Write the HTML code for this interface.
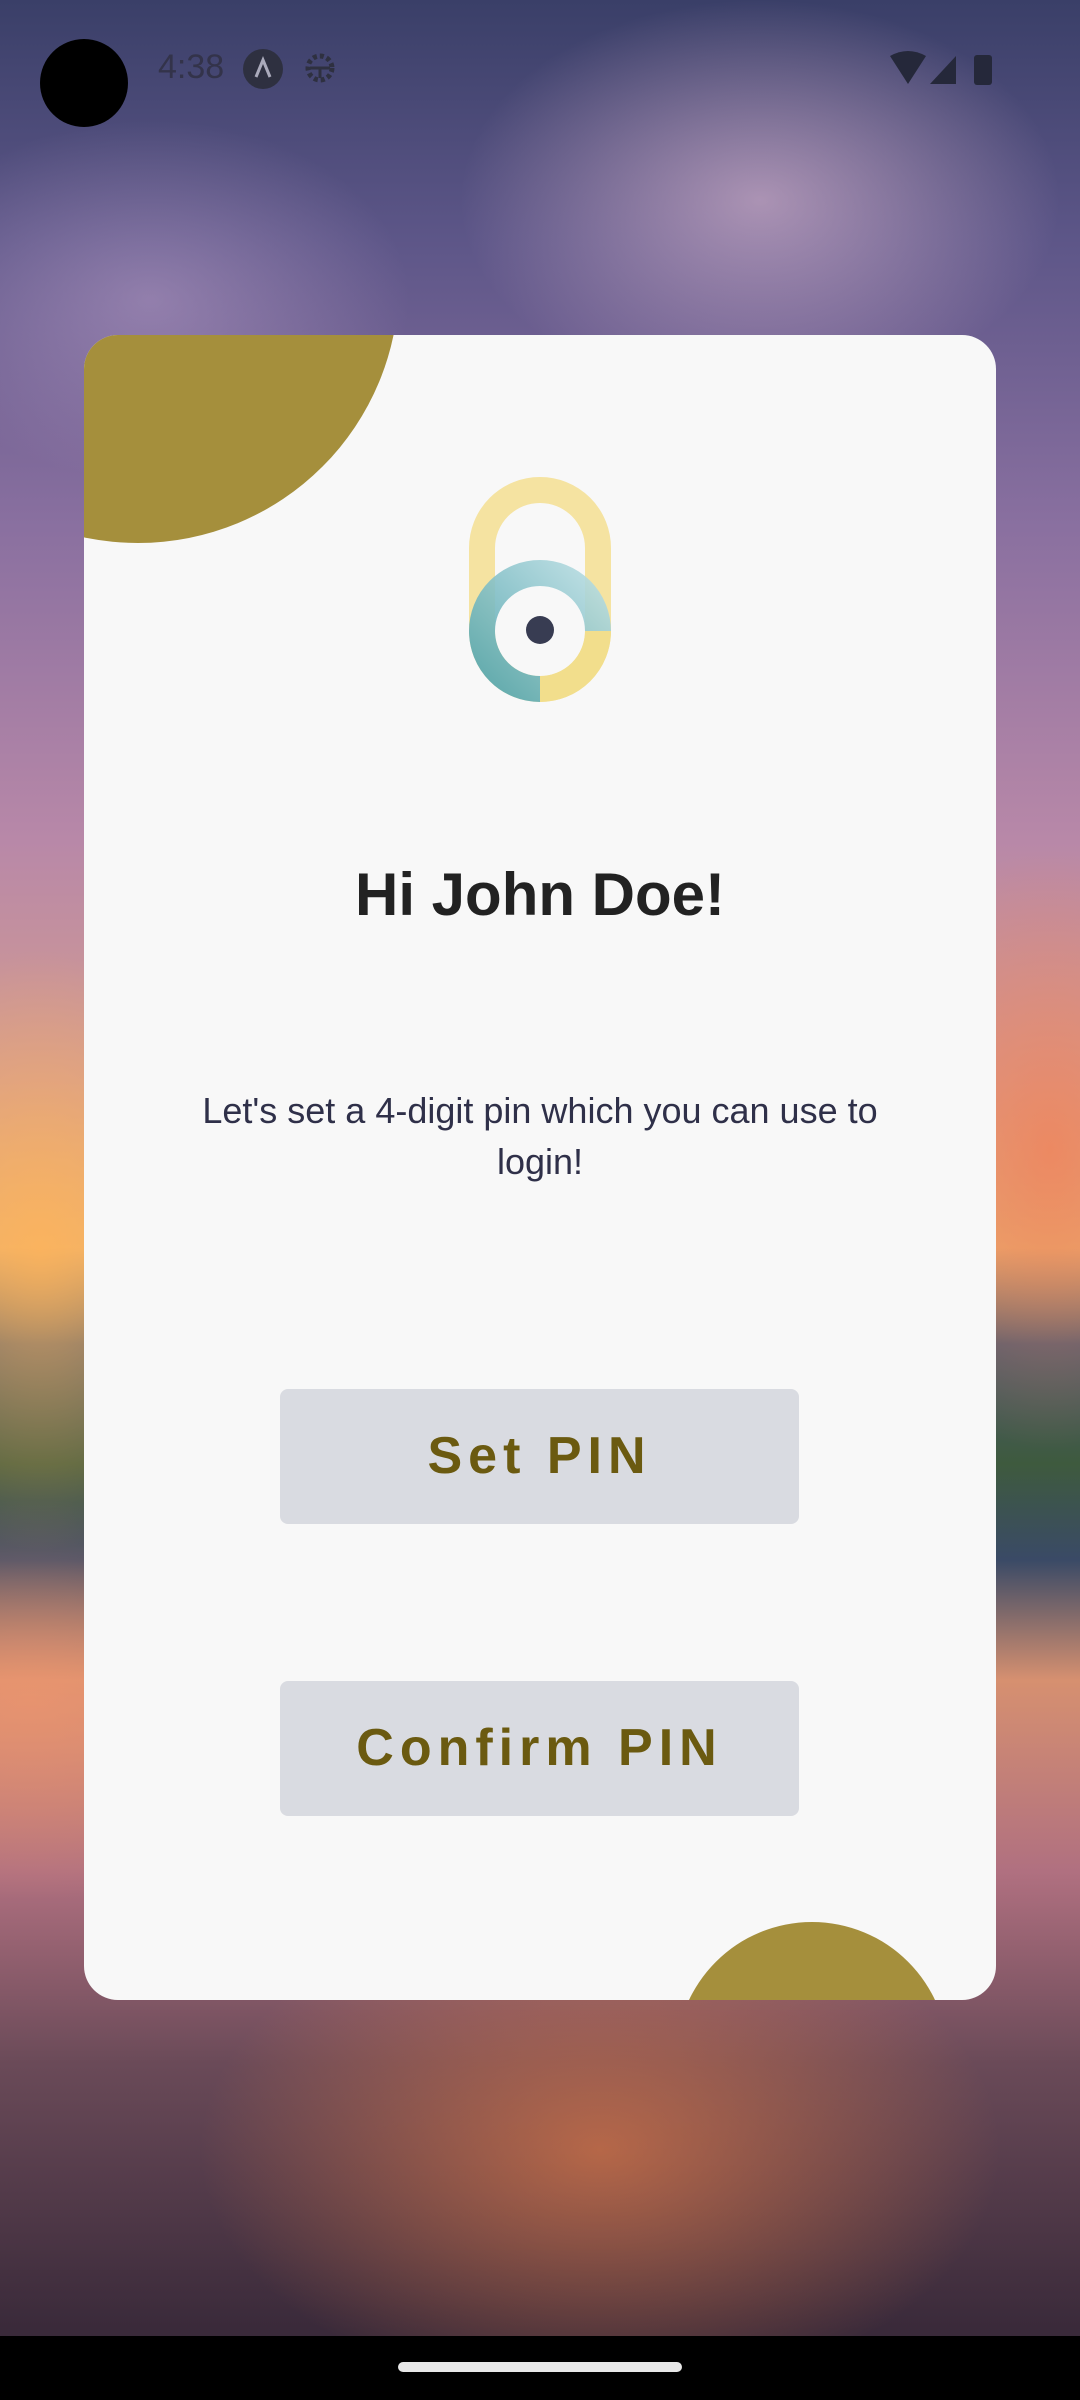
<!DOCTYPE html>
<html><head><meta charset="utf-8"><style>
*{margin:0;padding:0;box-sizing:border-box}
html,body{width:1080px;height:2400px;overflow:hidden}
body{position:relative;font-family:"Liberation Sans","DejaVu Sans",sans-serif;
background:
radial-gradient(ellipse 300px 200px at 760px 200px,rgba(240,200,220,.55),transparent),
radial-gradient(ellipse 260px 180px at 150px 300px,rgba(200,170,210,.45),transparent),
radial-gradient(ellipse 200px 300px at 40px 1250px,rgba(255,180,90,.8),transparent),
radial-gradient(ellipse 200px 300px at 1050px 1150px,rgba(240,130,90,.8),transparent),
radial-gradient(ellipse 300px 200px at 30px 1700px,rgba(240,150,110,.7),transparent),
radial-gradient(ellipse 400px 250px at 600px 2150px,rgba(220,120,70,.7),transparent),
linear-gradient(180deg,#3a3f68 0%,#5d5688 10%,#8a70a0 22%,#b888a8 35%,#d49c90 45%,#e8b070 52%,#4a5a70 56%,#3e5a3e 61%,#3a4a66 65%,#d69070 70%,#b07080 78%,#6a4a58 86%,#3a2a3a 97%);}
.nav{position:absolute;left:0;top:2336px;width:1080px;height:64px;background:#000}
.pill{position:absolute;left:398px;top:2362px;width:284px;height:10px;border-radius:5px;background:#e8e8e8}
.cam{position:absolute;left:40px;top:39px;width:88px;height:88px;border-radius:50%;background:#000}
.time{position:absolute;left:158px;top:48px;font-size:34px;color:#33334a}
.card{position:absolute;left:84px;top:335px;width:912px;height:1665px;background:#f8f8f8;border-radius:34px;overflow:hidden}
.c1{position:absolute;left:-207px;top:-314px;width:522px;height:522px;border-radius:50%;background:#a58f3c}
.c2{position:absolute;left:592px;top:1587px;width:272px;height:272px;border-radius:50%;background:#a58f3c}
h1{position:absolute;left:0;width:912px;top:525px;text-align:center;font-size:60px;font-weight:bold;color:#222}
.p{position:absolute;left:80px;width:752px;top:750px;text-align:center;font-size:36px;line-height:51px;color:#2f3049}
.btn{position:absolute;left:196px;width:519px;height:135px;background:#d9dbe1;border-radius:8px;text-align:center;line-height:135px;font-size:52px;font-weight:bold;letter-spacing:6px;color:#6b5a10}
</style></head><body>
<div class="cam"></div>
<div class="time">4:38</div>
<svg style="position:absolute;left:242px;top:48px" width="42" height="42"><circle cx="21" cy="21" r="20" fill="#2e3040"/><path d="M14 29 L21 12 L28 29" stroke="#aab" stroke-width="3" fill="none"/></svg>
<svg style="position:absolute;left:300px;top:48px" width="40" height="40"><circle cx="20" cy="20" r="12" fill="none" stroke="#2e3040" stroke-width="5" stroke-dasharray="4 3"/><path d="M10 20h20M20 20v10" stroke="#2e3040" stroke-width="3"/></svg>
<svg style="position:absolute;left:890px;top:50px" width="120" height="36"><path d="M0 6 Q18 -4 36 6 L18 34Z" fill="#25283a"/><path d="M40 34 L66 6 V34Z" fill="#25283a"/><rect x="84" y="5" width="18" height="30" rx="3" fill="#25283a"/></svg>
<div class="card">
<div class="c1"></div><div class="c2"></div>
<svg style="position:absolute;left:385px;top:142px" width="142" height="225" viewBox="0 0 142 225">
<defs><linearGradient id="t" x1="0" y1="1" x2="1" y2="0"><stop offset="0" stop-color="#4fa3ad"/><stop offset="1" stop-color="#b9dde2"/></linearGradient></defs>
<rect x="13" y="13" width="116" height="199" rx="58" fill="none" stroke="#f4e29c" stroke-width="26" opacity=".95"/>
<path d="M71 212 A58 58 0 1 1 129 154" fill="none" stroke="url(#t)" stroke-width="26" opacity=".9"/>
<path d="M129 154 A58 58 0 0 1 71 212" fill="none" stroke="#f2de8c" stroke-width="26"/>
<circle cx="71" cy="153" r="14" fill="#383c52"/>
</svg>
<h1>Hi John Doe!</h1>
<div class="p">Let's set a 4-digit pin which you can use to<br>login!</div>
<div class="btn" style="top:1054px">Set PIN</div>
<div class="btn" style="top:1346px">Confirm PIN</div>
</div>
<div class="nav"></div><div class="pill"></div>
</body></html>
